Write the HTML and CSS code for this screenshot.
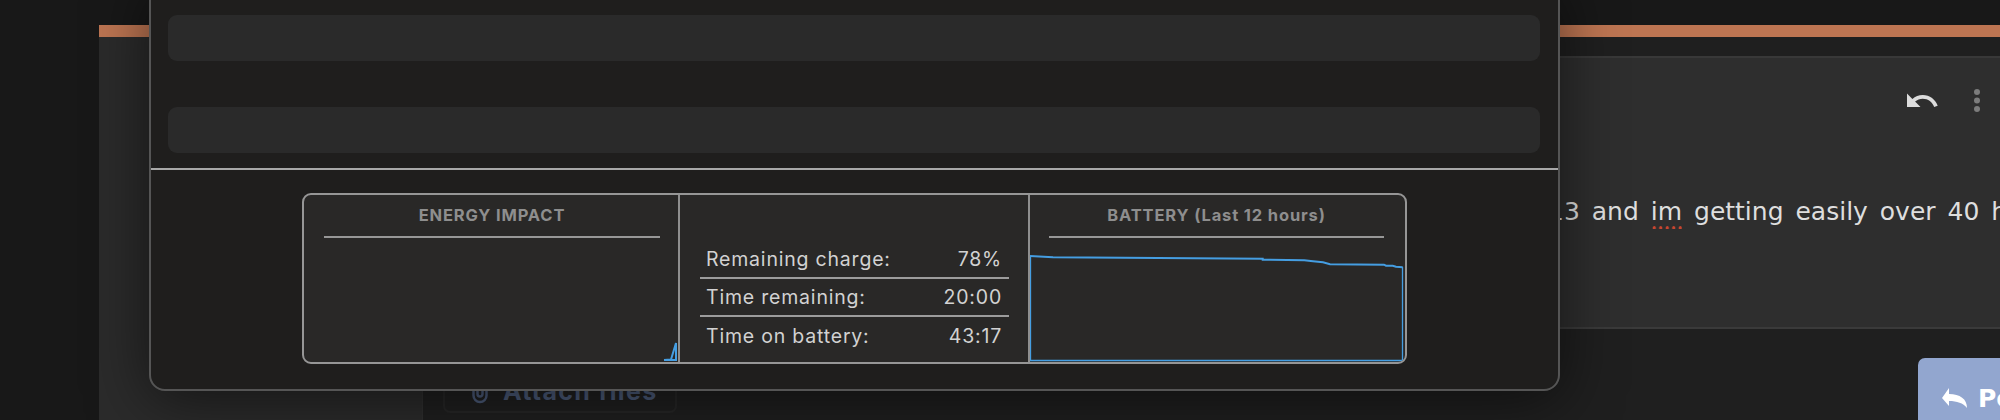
FILE: index.html
```html
<!DOCTYPE html>
<html lang="en">
<head>
<meta charset="utf-8">
<title>Battery thread</title>
<link rel="stylesheet" href="styles.css">
</head>
<body>
<div class="shell">
  <div class="accent"></div>
  <div class="columns">
    <aside class="sidebar"></aside>
    <main class="main">
      <div class="main-head"></div>
      <article class="post">
        <div class="actions">
          <svg class="undo" viewBox="0 0 24 24" width="36" height="36"><path d="M12.5 8c-2.65 0-5.05.99-6.9 2.6L2 7v9h9l-3.62-3.62c1.39-1.16 3.16-1.88 5.12-1.88 3.54 0 6.55 2.31 7.6 5.5l2.37-.78C21.08 11.03 17.15 8 12.5 8z"/></svg>
          <svg class="dots" viewBox="0 0 12 28" width="12" height="28"><circle cx="6" cy="5" r="3"/><circle cx="6" cy="13.5" r="3"/><circle cx="6" cy="22" r="3"/></svg>
        </div>
        <p class="post-text">13 and <span class="misspelt">im</span> getting easily over 40 hours</p>
      </article>
      <div class="footer">
        <div class="attach">
          <svg class="clip" viewBox="0 0 16 30" width="16" height="30"><path d="M1.5 8v13.5a6.5 6.5 0 0 0 13 0V6a4.5 4.5 0 0 0-9 0v14a2.500 2.500 0 0 0 5 0V9"/></svg>
          <span>Attach files</span>
        </div>
        <div class="reply">
          <svg class="reply-icon" viewBox="0 0 27 22" width="27" height="22"><path d="M1 11 8 1v6c11 0 18 5 18 14-4-5-10-7-18-7v5z"/></svg>
          <span>Post reply</span>
        </div>
      </div>
    </main>
  </div>
</div>

<section class="modal">
  <div class="skeletons">
    <div class="skeleton"></div>
    <div class="skeleton"></div>
  </div>
  <div class="summary">
    <div class="cell cell-energy">
      <h3 class="cell-title">ENERGY IMPACT</h3>
      <svg class="chart" viewBox="0 0 374 124" width="374" height="124"><polyline points="360,122 367,121.500 372,105 372,122 360,122"/></svg>
    </div>
    <div class="cell cell-stats">
      <div class="stat"><span>Remaining charge:</span><span>78%</span></div>
      <div class="stat"><span>Time remaining:</span><span>20:00</span></div>
      <div class="stat"><span>Time on battery:</span><span>43:17</span></div>
    </div>
    <div class="cell cell-battery">
      <h3 class="cell-title">BATTERY (Last 12 hours)</h3>
      <svg class="chart" viewBox="0 0 375 124" width="375" height="124"><polyline class="side" points="0.500,18 0.500,122.500 372.500,122.500 372.500,29"/><polyline points="0,18 23,19.300 232.700,20.700 232.700,21.700 274.300,22.300 283,23.300 293,24.300 300,26.300 354,26.700 356,27.700 362.700,27.700 366,28.700 372.700,29.300"/></svg>
    </div>
  </div>
</section>
</body>
</html>
```
FILE: styles.css
```css
* { box-sizing: border-box; }
html, body { margin: 0; height: 420px; overflow: hidden; background: #181818; }
body { position: relative; font-family: "Inter", "Liberation Sans", sans-serif; }

.shell { height: 420px; padding: 25px 0 0 99px; }
.accent { height: 12px; background: #bd7552; }
.columns { display: grid; grid-template-columns: 324px 1fr; height: 383px; }
.sidebar { background: #2b2b2b; border-right: 1px solid #2f2f2f; }
.main { min-width: 0; background: #1f1f1f; }
.main-head { height: 21px; border-bottom: 2px solid #383838; }

.post { height: 271px; padding-top: 25px; background: #2e2e2e; border-bottom: 2px solid #3a3a3a; }
.actions { display: flex; justify-content: flex-end; align-items: center; gap: 31px; padding-right: 17px; }
.undo { fill: #dcdcdc; }
.dots { fill: #7c7c7c; }
.post-text { margin: 76px 0 0; padding-left: 1125px; line-height: 34px; font-family: "DejaVu Sans", sans-serif; font-size: 25px; word-spacing: 4px; color: #dedede; white-space: nowrap; overflow: hidden; }
.misspelt { padding-bottom: 4px; background: radial-gradient(circle, #c8452f 1.5px, transparent 2px) left bottom / 6.500px 4px repeat-x; }

.footer { display: flex; align-items: flex-start; height: 91px; padding: 29px 0 0 20px; }
.attach { display: flex; align-items: center; gap: 15px; width: 234px; height: 45px; margin-top: 10px; padding-left: 27px; border: 2px solid #262626; border-radius: 7px; font-size: 25px; font-weight: 700; letter-spacing: 1.300px; color: #4b5a78; white-space: nowrap; }
.clip { flex: none; fill: none; stroke: #4b5a78; stroke-width: 2.500; margin-top: -4px; }
.reply { display: flex; align-items: flex-start; gap: 10px; width: 82px; height: 62px; margin-left: auto; padding: 29px 0 0 23px; border-radius: 7px 0 0 0; background: #92a6cf; font-family: "DejaVu Sans", sans-serif; font-size: 25px; font-weight: 700; line-height: 24px; color: #fff; white-space: nowrap; overflow: hidden; }
.reply-icon { flex: none; fill: #fff; }

.modal { position: absolute; left: 149px; top: -20px; width: 1411px; height: 411px; background: #1f1e1d; border: 2px solid #555; border-radius: 16px; box-shadow: 0 8px 60px rgba(0, 0, 0, .55); }
.skeletons { display: flex; flex-direction: column; gap: 46px; height: 188px; padding: 33px 18px 0 17px; border-bottom: 2px solid #a8a8a8; }
.skeleton { height: 46px; border-radius: 9px; background: #2a2a2a; }

.summary { display: grid; grid-template-columns: 376px 350px 1fr; width: 1105px; height: 171px; margin: 23px auto 0; background: #292827; border: 2px solid #969696; border-radius: 9px; overflow: hidden; }
.cell { min-width: 0; }
.cell-energy, .cell-stats { border-right: 2px solid #8f8f8f; }
.cell-title { margin: 0 18px 0 20px; height: 43px; padding-top: 11px; border-bottom: 2px solid #979797; font-size: 16.500px; line-height: 18px; font-weight: 700; text-align: center; color: #8e8e8e; letter-spacing: .85px; }
.cell-battery .cell-title { margin: 0 21px 0 19px; }
.chart { display: block; fill: none; stroke: #459ee2; stroke-width: 2; }
.chart .side { stroke-width: 1.300; }

.cell-stats { display: flex; flex-direction: column; justify-content: flex-end; padding: 0 19px 7px 20px; }
.stat { display: flex; justify-content: space-between; align-items: center; height: 38px; padding: 0 7px 0 6px; font-size: 19.500px; letter-spacing: .8px; color: #d2d2d2; border-bottom: 2px solid #9c9c9c; }
.stat:last-child { border-bottom: 0; }
```
